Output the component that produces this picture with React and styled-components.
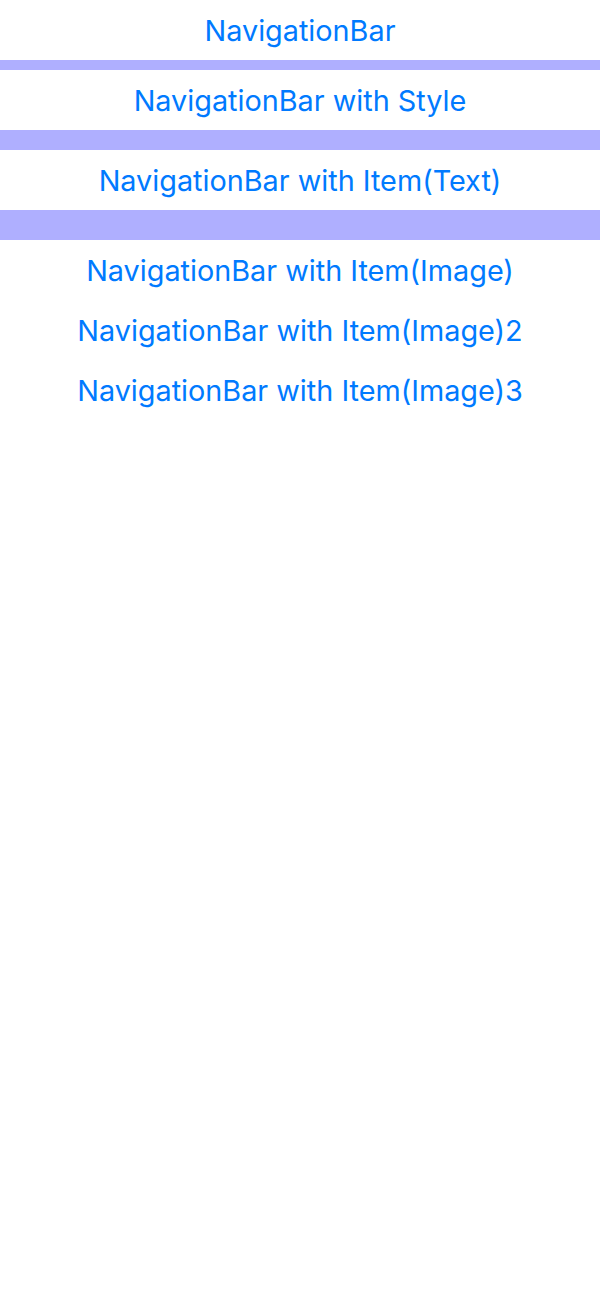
import React from "react";
import styled, { createGlobalStyle } from "styled-components";

const Global = createGlobalStyle`
  html, body { margin: 0; padding: 0; background: #fff; }
  body { font-family: Inter, "Noto Sans", sans-serif; }
`;

const List = styled.div`
  display: flex;
  flex-direction: column;
  width: 600px;
`;

const Row = styled.button`
  display: flex;
  align-items: center;
  justify-content: center;
  height: 60px;
  width: 100%;
  border: 0;
  padding: 0;
  margin: 0;
  background: #fff;
  color: #007aff;
  font-family: Inter, "Noto Sans", sans-serif;
  font-size: 28.8px;
  font-weight: 400;
  cursor: pointer;
`;

const Separator = styled.div`
  height: ${(p) => p.$h}px;
  background: #afafff;
`;

const items = [
  { label: "NavigationBar", sep: 10 },
  { label: "NavigationBar with Style", sep: 20 },
  { label: "NavigationBar with Item(Text)", sep: 30 },
  { label: "NavigationBar with Item(Image)" },
  { label: "NavigationBar with Item(Image)2" },
  { label: "NavigationBar with Item(Image)3" },
];

export default function App() {
  return (
    <>
      <Global />
      <List>
        {items.map((it) => (
          <React.Fragment key={it.label}>
            <Row>{it.label}</Row>
            {it.sep ? <Separator $h={it.sep} /> : null}
          </React.Fragment>
        ))}
      </List>
    </>
  );
}
